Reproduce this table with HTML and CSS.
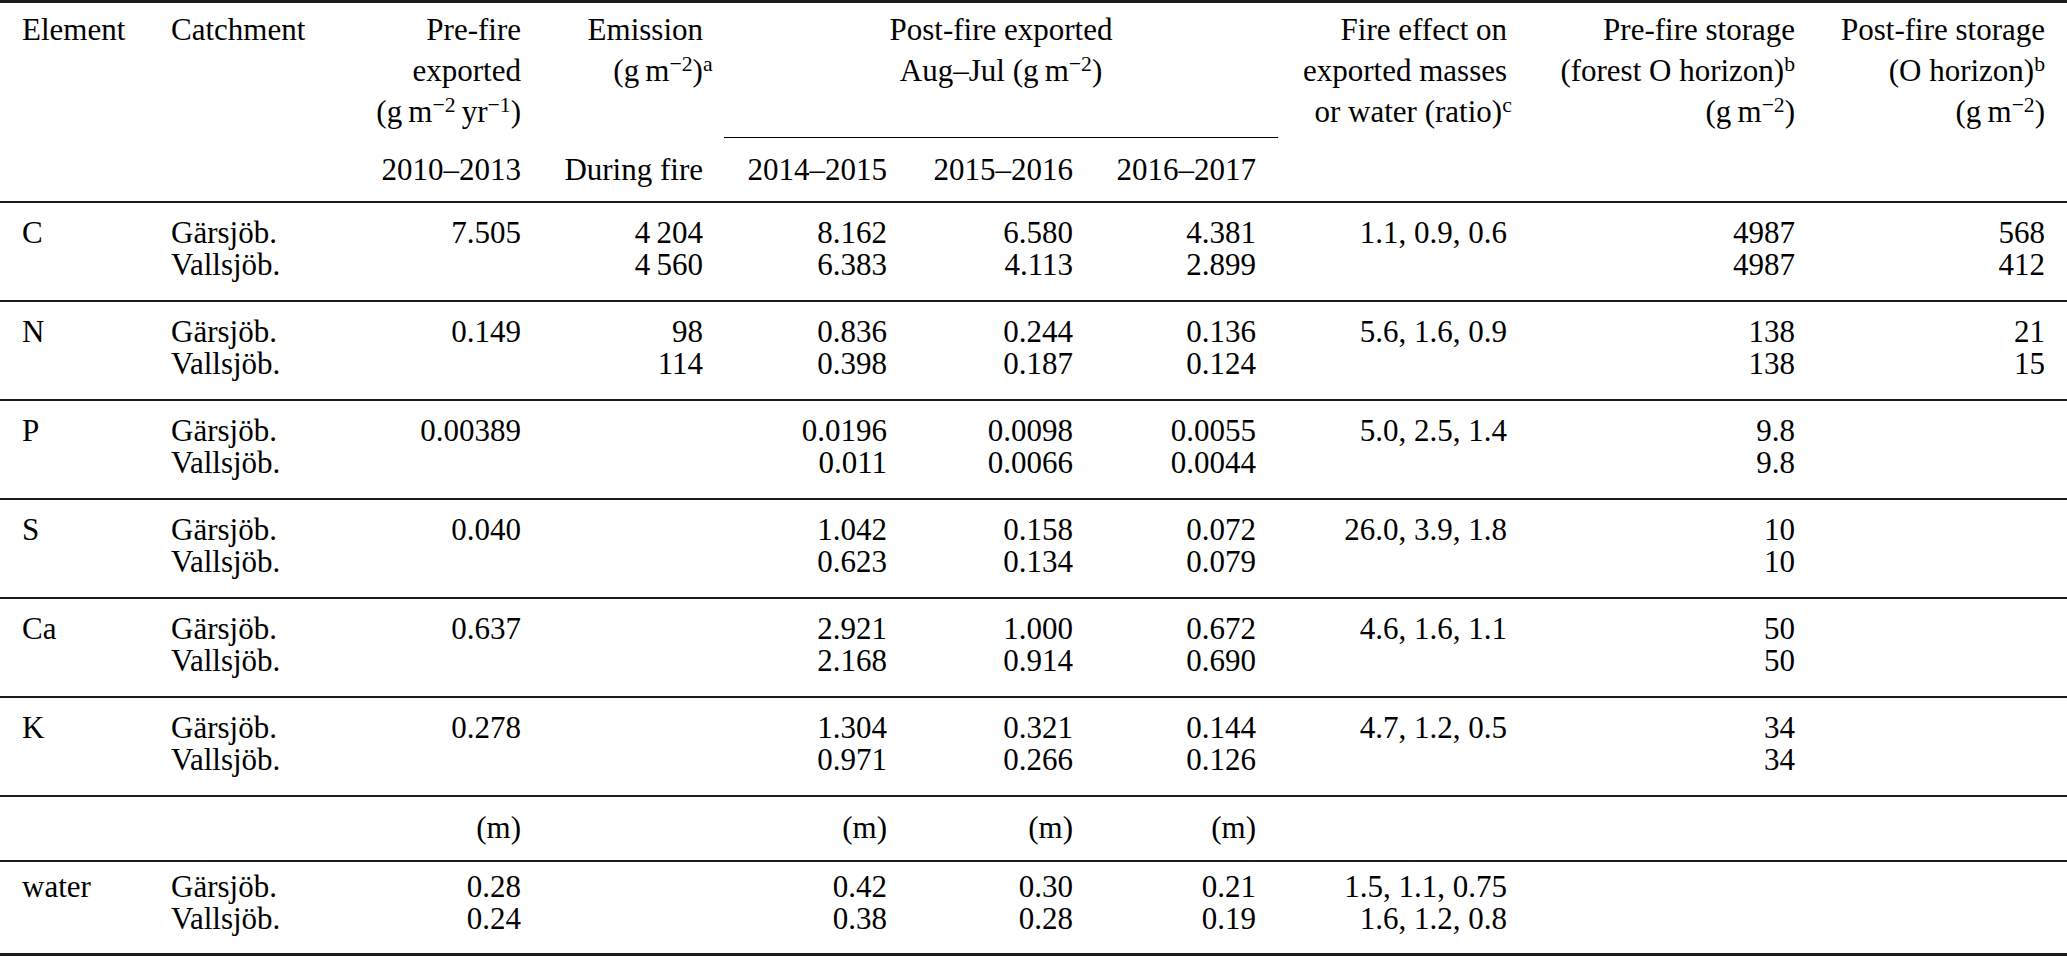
FILE: index.html
```html
<!DOCTYPE html>
<html lang="en">
<head>
<meta charset="utf-8">
<title>Fire effect on exported and stored elements</title>
<link rel="stylesheet" href="styles.css">
</head>
<body>
<table class="data">
  <colgroup>
    <col class="w-el"><col class="w-ca"><col class="w-pre"><col class="w-em"><col class="w-y1"><col class="w-y2"><col class="w-y3"><col class="w-fe"><col class="w-ps"><col class="w-po">
  </colgroup>
  <thead>
    <tr class="h1">
      <th class="l el" rowspan="2">Element</th>
      <th class="l ca" rowspan="2">Catchment</th>
      <th class="r pre">Pre-fire<br>exported<br>(g&thinsp;m<sup>−2</sup>&thinsp;yr<sup>−1</sup>)</th>
      <th class="r em">Emission<br>(g&thinsp;m<sup>−2</sup>)<sup class="fn-a">a</sup></th>
      <th class="c span" colspan="3">Post-fire exported<br>Aug–Jul (g&thinsp;m<sup>−2</sup>)</th>
      <th class="r fe" rowspan="2">Fire effect on<br>exported masses<br>or water (ratio)<sup class="fn-c">c</sup></th>
      <th class="r ps" rowspan="2">Pre-fire storage<br>(forest O horizon)<sup>b</sup><br>(g&thinsp;m<sup>−2</sup>)</th>
      <th class="r po" rowspan="2">Post-fire storage<br>(O horizon)<sup>b</sup><br>(g&thinsp;m<sup>−2</sup>)</th>
    </tr>
    <tr class="h2">
      <th class="r pre">2010–2013</th>
      <th class="r em">During fire</th>
      <th class="r y1">2014–2015</th>
      <th class="r y2">2015–2016</th>
      <th class="r y3">2016–2017</th>
    </tr>
  </thead>
  <tbody>
    <tr class="grp">
      <td class="l el">C</td>
      <td class="l ca">Gärsjöb.<br>Vallsjöb.</td>
      <td class="r pre">7.505</td>
      <td class="r em">4&thinsp;204<br>4&thinsp;560</td>
      <td class="r y1">8.162<br>6.383</td>
      <td class="r y2">6.580<br>4.113</td>
      <td class="r y3">4.381<br>2.899</td>
      <td class="r fe">1.1, 0.9, 0.6</td>
      <td class="r ps">4987<br>4987</td>
      <td class="r po">568<br>412</td>
    </tr>
    <tr class="grp">
      <td class="l el">N</td>
      <td class="l ca">Gärsjöb.<br>Vallsjöb.</td>
      <td class="r pre">0.149</td>
      <td class="r em">98<br>114</td>
      <td class="r y1">0.836<br>0.398</td>
      <td class="r y2">0.244<br>0.187</td>
      <td class="r y3">0.136<br>0.124</td>
      <td class="r fe">5.6, 1.6, 0.9</td>
      <td class="r ps">138<br>138</td>
      <td class="r po">21<br>15</td>
    </tr>
    <tr class="grp">
      <td class="l el">P</td>
      <td class="l ca">Gärsjöb.<br>Vallsjöb.</td>
      <td class="r pre">0.00389</td>
      <td class="r em"></td>
      <td class="r y1">0.0196<br>0.011</td>
      <td class="r y2">0.0098<br>0.0066</td>
      <td class="r y3">0.0055<br>0.0044</td>
      <td class="r fe">5.0, 2.5, 1.4</td>
      <td class="r ps">9.8<br>9.8</td>
      <td class="r po"></td>
    </tr>
    <tr class="grp">
      <td class="l el">S</td>
      <td class="l ca">Gärsjöb.<br>Vallsjöb.</td>
      <td class="r pre">0.040</td>
      <td class="r em"></td>
      <td class="r y1">1.042<br>0.623</td>
      <td class="r y2">0.158<br>0.134</td>
      <td class="r y3">0.072<br>0.079</td>
      <td class="r fe">26.0, 3.9, 1.8</td>
      <td class="r ps">10<br>10</td>
      <td class="r po"></td>
    </tr>
    <tr class="grp">
      <td class="l el">Ca</td>
      <td class="l ca">Gärsjöb.<br>Vallsjöb.</td>
      <td class="r pre">0.637</td>
      <td class="r em"></td>
      <td class="r y1">2.921<br>2.168</td>
      <td class="r y2">1.000<br>0.914</td>
      <td class="r y3">0.672<br>0.690</td>
      <td class="r fe">4.6, 1.6, 1.1</td>
      <td class="r ps">50<br>50</td>
      <td class="r po"></td>
    </tr>
    <tr class="grp">
      <td class="l el">K</td>
      <td class="l ca">Gärsjöb.<br>Vallsjöb.</td>
      <td class="r pre">0.278</td>
      <td class="r em"></td>
      <td class="r y1">1.304<br>0.971</td>
      <td class="r y2">0.321<br>0.266</td>
      <td class="r y3">0.144<br>0.126</td>
      <td class="r fe">4.7, 1.2, 0.5</td>
      <td class="r ps">34<br>34</td>
      <td class="r po"></td>
    </tr>
    <tr class="unit">
      <td class="l el"></td>
      <td class="l ca"></td>
      <td class="r pre">(m)</td>
      <td class="r em"></td>
      <td class="r y1">(m)</td>
      <td class="r y2">(m)</td>
      <td class="r y3">(m)</td>
      <td class="r fe"></td>
      <td class="r ps"></td>
      <td class="r po"></td>
    </tr>
    <tr class="grp last">
      <td class="l el">water</td>
      <td class="l ca">Gärsjöb.<br>Vallsjöb.</td>
      <td class="r pre">0.28<br>0.24</td>
      <td class="r em"></td>
      <td class="r y1">0.42<br>0.38</td>
      <td class="r y2">0.30<br>0.28</td>
      <td class="r y3">0.21<br>0.19</td>
      <td class="r fe">1.5, 1.1, 0.75<br>1.6, 1.2, 0.8</td>
      <td class="r ps"></td>
      <td class="r po"></td>
    </tr>
  </tbody>
</table>
</body>
</html>
```

FILE: styles.css
```css
html, body {
  margin: 0;
  padding: 0;
  background: #ffffff;
}

body {
  font-family: "Liberation Serif", "Times New Roman", serif;
  font-size: 31px;
  color: #000000;
}

.data {
  width: 2067px;
  table-layout: fixed;
  border-collapse: separate;
  border-spacing: 0;
  border-top: 3px solid #1c1c1c;
  border-bottom: 3px solid #1c1c1c;
}

.w-el { width: 150px; }
.w-ca { width: 180px; }
.w-pre { width: 212px; }
.w-em { width: 182px; }
.w-y1 { width: 184px; }
.w-y2 { width: 186px; }
.w-y3 { width: 184px; }
.w-fe { width: 250px; }
.w-ps { width: 288px; }
.w-po { width: 251px; }

th, td {
  font-weight: normal;
  vertical-align: top;
  white-space: nowrap;
  padding-left: 4px;
  padding-right: 21px;
  box-sizing: border-box;
}

th {
  line-height: 41px;
}

td {
  line-height: 32px;
}

.l { text-align: left; }
.r { text-align: right; }
.c { text-align: center; }

.el { padding-left: 22px; padding-right: 4px; }
.ca { padding-left: 21px; padding-right: 4px; }
.y3, .po { padding-right: 22px; }

.h1 th {
  padding-top: 6px;
  padding-bottom: 6px;
}

.h1 th.span {
  padding-left: 0;
  padding-right: 0;
  border-bottom: 1px solid #000000;
}

.h2 th {
  padding-top: 11px;
  padding-bottom: 11px;
}

.grp td {
  border-top: 2px solid #1c1c1c;
  padding-top: 14px;
  padding-bottom: 19px;
}

.unit td {
  border-top: 2px solid #1c1c1c;
  padding-top: 15px;
  padding-bottom: 16px;
}

.grp.last td {
  padding-top: 9px;
  padding-bottom: 18px;
}

sup {
  font-size: 0.7em;
  line-height: 0;
  vertical-align: 0.45em;
}

.fn-a {
  margin-right: -0.44em;
}

.fn-c {
  margin-right: -0.22em;
}
```
